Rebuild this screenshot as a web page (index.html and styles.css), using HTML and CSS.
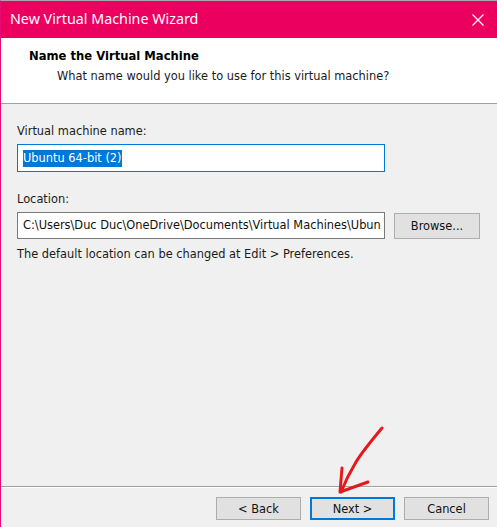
FILE: index.html
```html
<!DOCTYPE html>
<html>
<head>
<meta charset="utf-8">
<link rel="stylesheet" href="styles.css">
</head>
<body>
<div class="window">
  <div class="titlebar">
    <span class="title">New Virtual Machine Wizard</span>
    <svg class="close" width="12" height="12" viewBox="0 0 12 12"><path d="M0.5 0.5 L11.5 11.5 M11.5 0.5 L0.5 11.5" stroke="#fff" stroke-width="1.2" fill="none"/></svg>
  </div>
  <div class="header">
    <div class="h-title">Name the Virtual Machine</div>
    <div class="h-sub">What name would you like to use for this virtual machine?</div>
  </div>
  <div class="content">
    <div class="label">Virtual machine name:</div>
    <div class="input focused"><span class="sel">Ubuntu 64-bit (2)</span></div>
    <div class="label loc-label">Location:</div>
    <div class="loc-row">
      <div class="input loc">C:\Users\Duc Duc\OneDrive\Documents\Virtual Machines\Ubun</div>
      <div class="btn browse">Browse...</div>
    </div>
    <div class="note">The default location can be changed at Edit &gt; Preferences.</div>
  </div>
  <div class="footer">
    <div class="btn">&lt; Back</div>
    <div class="btn primary">Next &gt;</div>
    <div class="btn cancel">Cancel</div>
  </div>
  <svg class="arrow" width="497" height="527" viewBox="0 0 497 527">
    <path d="M382 428 C372 440 362 452 356 462 C350 472 345 482 341 492" stroke="#e5191c" stroke-width="3" fill="none" stroke-linecap="round"/>
    <path d="M342 468 L340 492 L368 482" stroke="#e5191c" stroke-width="3" fill="none" stroke-linecap="round" stroke-linejoin="round"/>
  </svg>
</div>
</body>
</html>
```
FILE: styles.css
```css
* { box-sizing: border-box; }
html, body { margin: 0; padding: 0; }
body {
  font-family: "DejaVu Sans", "Liberation Sans", sans-serif;
  font-size: 11.4px;
  color: #000;
  background: #f0f0f0;
}
.window {
  position: relative;
  width: 497px;
  height: 527px;
  border-top: 1px solid #a9a9a9;
  border-left: 1px solid #ea0a74;
  background: #f0f0f0;
  display: flex;
  flex-direction: column;
  overflow: hidden;
}
.titlebar {
  height: 37px;
  background: #eb0060;
  display: flex;
  align-items: center;
  justify-content: space-between;
  padding: 0 13px 0 9px;
  flex-shrink: 0;
}
.title {
  color: #fff;
  font-family: "Noto Sans", "Open Sans", sans-serif;
  font-size: 14.3px;
  padding-bottom: 2px;
}
.close { display: block; }
.header {
  background: #fff;
  height: 66px;
  border-bottom: 1px solid #a0a0a0;
  padding: 11px 0 0 28px;
  flex-shrink: 0;
}
.h-title {
  font-weight: bold;
  line-height: 15px;
  font-size: 11.6px;
}
.h-sub {
  line-height: 15px;
  margin-top: 5px;
  padding-left: 28px;
  color: #1a1a1a;
}
.content {
  flex: 1;
  padding: 20px 0 0 16px;
}
.label {
  line-height: 15px;
  color: #1a1a1a;
}
.input {
  background: #fff;
  border: 1px solid #7a7a7a;
  height: 28px;
  width: 368px;
  margin-top: 5px;
  padding: 0 5px;
  display: flex;
  align-items: center;
  white-space: nowrap;
  overflow: hidden;
  line-height: 17px;
}
.input.focused {
  border-color: #0078d7;
}
.sel {
  background: #0078d7;
  color: #fff;
  line-height: 17px;
}
.loc-label { margin-top: 20px; }
.loc-row {
  display: flex;
  align-items: flex-start;
  gap: 9px;
  margin-top: 5px;
}
.input.loc {
  margin-top: 0;
  height: 27px;
  display: block;
  line-height: 25px;
  color: #111;
  text-overflow: clip;
}
.btn {
  background: #e1e1e1;
  border: 1px solid #adadad;
  width: 86px;
  height: 23px;
  display: flex;
  align-items: center;
  justify-content: center;
  color: #111;
}
.browse {
  margin-top: 1px;
  height: 26px;
}
.note {
  margin-top: 8px;
  line-height: 15px;
  color: #1a1a1a;
}
.footer {
  height: 41px;
  border-top: 1px solid #a0a0a0;
  box-shadow: inset 0 1px 0 #fff;
  display: flex;
  justify-content: flex-end;
  align-items: flex-start;
  gap: 9px;
  padding: 10px 8px 0 0;
  flex-shrink: 0;
}
.footer .btn { width: 85px; }
.btn.primary {
  border: 2px solid #0078d7;
}
.arrow {
  position: absolute;
  left: -1px;
  top: -1px;
  pointer-events: none;
}
```
